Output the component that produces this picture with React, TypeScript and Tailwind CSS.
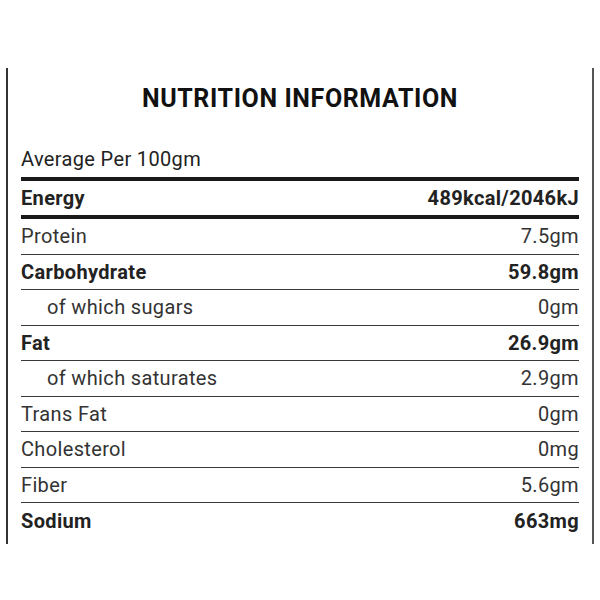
const rows: { label: string; value: string; bold?: boolean; indent?: boolean }[] = [
  { label: "Protein", value: "7.5gm" },
  { label: "Carbohydrate", value: "59.8gm", bold: true },
  { label: "of which sugars", value: "0gm", indent: true },
  { label: "Fat", value: "26.9gm", bold: true },
  { label: "of which saturates", value: "2.9gm", indent: true },
  { label: "Trans Fat", value: "0gm" },
  { label: "Cholesterol", value: "0mg" },
  { label: "Fiber", value: "5.6gm" },
  { label: "Sodium", value: "663mg", bold: true },
];

export default function App() {
  return (
    <div className="w-full bg-white pt-[68px] pb-[20px] font-['Roboto',sans-serif] text-[#222]">
      <div className="ml-[6px] w-[588px] border-l-2 border-l-[#333] border-r-2 border-r-[#555] px-[13px] pb-[5px]">
        <h2 className="pt-[16px] text-center text-[25px] font-bold leading-[30px] tracking-[0.6px] text-[#111]">
          NUTRITION INFORMATION
        </h2>

        <div className="mt-[33px] text-[20px] leading-[24px] tracking-[0.35px]">Average Per 100gm</div>

        <div className="mt-[5.6px] h-[4px] bg-[#1a1a1a]" />
        <div className="flex h-[34.5px] items-center justify-between text-[20px] font-bold tracking-[0.35px]">
          <span>Energy</span>
          <span>489kcal/2046kJ</span>
        </div>
        <div className="h-[4px] bg-[#1a1a1a]" />

        {rows.map((r, i) => (
          <div
            key={r.label}
            className={`flex h-[35.5px] items-center justify-between text-[20px] tracking-[0.35px] ${
              i < rows.length - 1 ? "border-b-[1.5px] border-[#3a3a3a]" : ""
            } ${r.bold ? "font-bold" : "font-normal text-[#333]"}`}
          >
            <span className={r.indent ? "pl-[26px]" : ""}>{r.label}</span>
            <span>{r.value}</span>
          </div>
        ))}
      </div>
    </div>
  );
}
